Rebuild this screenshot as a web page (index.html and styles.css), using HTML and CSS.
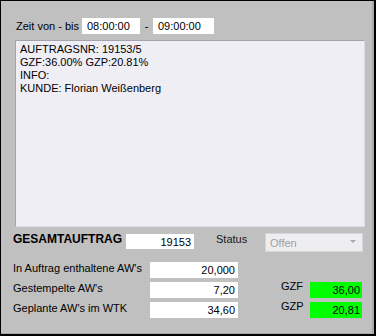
FILE: index.html
```html
<!DOCTYPE html>
<html lang="de">
<head>
    <meta charset="UTF-8">
    <meta name="viewport" content="width=device-width, initial-scale=1.0">
    <title>Auftrag</title>
    <link rel="stylesheet" href="styles.css">
</head>
<body>
    <div class="window">
        <div class="time-row">
            <span class="time-label">Zeit von - bis</span>
            <input type="text" class="field time-from" value="08:00:00">
            <span class="dash">-</span>
            <input type="text" class="field time-to" value="09:00:00">
        </div>

        <div class="memo">
            AUFTRAGSNR: 19153/5<br>
            GZF:36.00% GZP:20.81%<br>
            INFO:<br>
            KUNDE: Florian Weißenberg
        </div>

        <div class="order-row">
            <span class="order-label">GESAMTAUFTRAG</span>
            <input type="text" class="field order-nr" value="19153">
            <span class="status-label">Status</span>
            <div class="status-select">
                <span>Offen</span>
                <span class="arrow"></span>
            </div>
        </div>

        <div class="aw-row">
            <span class="aw-label">In Auftrag enthaltene AW's</span>
            <input type="text" class="field aw-value" value="20,000">
        </div>
        <div class="aw-row">
            <span class="aw-label">Gestempelte AW's</span>
            <input type="text" class="field aw-value" value="7,20">
            <span class="g-label">GZF</span>
            <input type="text" class="field g-value" value="36,00">
        </div>
        <div class="aw-row">
            <span class="aw-label">Geplante AW's im WTK</span>
            <input type="text" class="field aw-value" value="34,60">
            <span class="g-label">GZP</span>
            <input type="text" class="field g-value" value="20,81">
        </div>
    </div>
</body>
</html>
```

FILE: styles.css
```css
body {
    margin: 0;
    font-family: "Liberation Sans", Arial, sans-serif;
    font-size: 11px;
    color: #000;
}
.window {
    width: 376px;
    height: 336px;
    box-sizing: border-box;
    background-color: #c0c0c0;
    border-top: 1px solid #000;
    border-left: 1px solid #000;
    border-right: 2px solid #000;
    border-bottom: 2px solid #000;
    box-shadow: inset -2px -1px 0 #a9a9a9;
    padding: 17px 0 0 12px;
}
.field {
    box-sizing: border-box;
    border: none;
    outline: none;
    margin: 0;
    padding: 0 3px;
    background-color: #fff;
    font-family: "Liberation Sans", Arial, sans-serif;
    font-size: 11px;
    color: #000;
    height: 16px;
}
.time-row {
    display: flex;
    align-items: center;
    height: 16px;
    padding-left: 3px;
}
.time-label {
    width: 66px;
    font-size: 11px;
}
.time-from {
    width: 58px;
    padding-left: 5px;
}
.dash {
    width: 13px;
    text-align: center;
}
.time-to {
    width: 61px;
    padding-left: 5px;
}
.memo {
    box-sizing: border-box;
    width: 350px;
    height: 187px;
    margin: 6px 0 0 2px;
    padding: 2px 4px;
    background-color: #efeef5;
    border-top: 1px solid #a3a3ab;
    border-left: 1px solid #a3a3ab;
    border-right: 1px solid #dcdce2;
    border-bottom: 1px solid #dcdce2;
    line-height: 13px;
}
.order-row {
    display: flex;
    align-items: flex-start;
    height: 19px;
    margin-top: 6px;
}
.order-label {
    width: 113px;
    font-size: 12px;
    font-weight: bold;
    line-height: 15px;
    margin-top: -1px;
}
.order-nr {
    width: 68px;
    height: 15px;
    margin-top: 1px;
    text-align: right;
}
.status-label {
    width: 49px;
    margin-left: 22px;
    line-height: 15px;
    margin-top: -1px;
    color: #1a1a1a;
}
.status-select {
    box-sizing: border-box;
    width: 98px;
    height: 19px;
    display: flex;
    align-items: center;
    justify-content: space-between;
    padding: 0 6px 0 4px;
    background-color: #eeeef1;
    border: 1px solid #d6d6da;
    color: #a0a0a0;
    font-size: 11px;
}
.arrow {
    width: 0;
    height: 0;
    border-left: 3px solid transparent;
    border-right: 3px solid transparent;
    border-top: 3px solid #a8a8a8;
    margin-top: -3px;
}
.aw-row {
    display: flex;
    align-items: flex-start;
    height: 16px;
    margin-bottom: 4px;
}
.order-row + .aw-row {
    margin-top: 10px;
}
.aw-label {
    width: 137px;
    line-height: 16px;
    margin-top: -2px;
}
.aw-value {
    width: 88px;
    text-align: right;
}
.g-label {
    width: 29px;
    margin-left: 43px;
    line-height: 16px;
    margin-top: -4px;
}
.g-value {
    width: 52px;
    text-align: right;
    padding-right: 2px;
    background-color: #00ff00;
}
```
